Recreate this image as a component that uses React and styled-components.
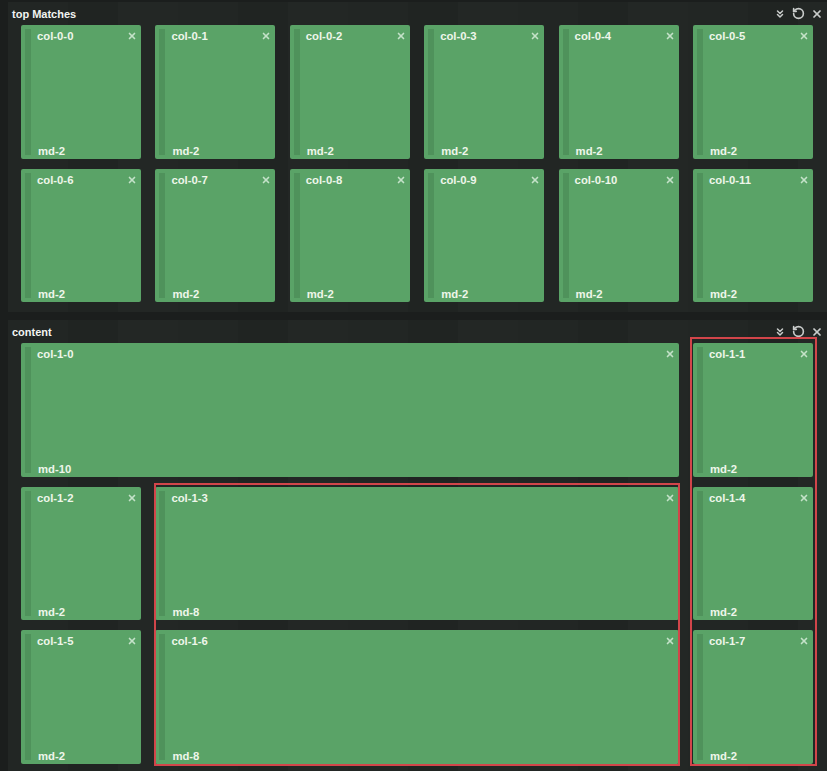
import React from "react";
import styled, { createGlobalStyle } from "styled-components";
import { ChevronsDown, RotateCcw, X } from "lucide-react";

const Global = createGlobalStyle`
  html, body { margin: 0; padding: 0; background: #1b1e1d; }
  body { font-family: "Liberation Sans", Arial, sans-serif; }
  * { box-sizing: border-box; }
`;

const Page = styled.div`
  width: 827px;
  min-height: 771px;
  padding: 2px 0 0 8px;
  display: flex;
  flex-direction: column;
  gap: 8px;
  background: #1b1e1d;
`;

const Panel = styled.section`
  background: repeating-linear-gradient(90deg, #222624 0 60px, #202422 60px 110px, #232725 110px 170px);
  display: flex;
  flex-direction: column;
  padding-bottom: ${(p) => p.$pb}px;
`;

const Header = styled.div`
  height: 23px;
  display: flex;
  align-items: center;
  padding: 0 4px 0 4px;
  color: #f2f4f1;
  font-weight: bold;
  font-size: 11px;
`;

const Title = styled.span`
  flex: 1;
`;

const Tools = styled.div`
  display: flex;
  align-items: center;
  gap: 6px;
  color: #c9cccb;
`;

const Grid = styled.div`
  display: grid;
  grid-template-columns: repeat(6, 1fr);
  grid-auto-rows: 133.5px;
  column-gap: 14.4px;
  row-gap: 10px;
  padding: 0 14px 0 13px;
`;

const Tile = styled.div`
  grid-column: ${(p) => p.$col} / span ${(p) => p.$span};
  grid-row: ${(p) => p.$row};
  background: #5aa367;
  border-radius: 2px;
  display: flex;
  padding: 4px;
  color: #eef6ea;
  font-weight: bold;
  font-size: 11.3px;
`;

const Stripe = styled.div`
  width: 6px;
  background: #4f925b;
  flex: none;
`;

const TileBody = styled.div`
  flex: 1;
  display: flex;
  flex-direction: column;
  justify-content: space-between;
  padding: 1px 0 0 6px;
`;

const TileTop = styled.div`
  display: flex;
  justify-content: space-between;
  align-items: center;
`;

const TileBottom = styled.div`
  padding-left: 1px;
  line-height: 13px;
  margin-bottom: -3px;
`;

const Close = styled.span`
  color: #c4e2c8;
  display: flex;
`;

const Highlight = styled.div`
  grid-column: ${(p) => p.$col} / span ${(p) => p.$span};
  grid-row: ${(p) => p.$row} / span ${(p) => p.$rows};
  margin: ${(p) => p.$m};
  border: 2px solid #d2454a;
  pointer-events: none;
  z-index: 2;
`;

const top = Array.from({ length: 12 }, (_, i) => ({
  id: `col-0-${i}`,
  col: (i % 6) + 1,
  span: 1,
  row: Math.floor(i / 6) + 1,
  md: "md-2",
}));

const content = [
  { id: "col-1-0", col: 1, span: 5, row: 1, md: "md-10" },
  { id: "col-1-1", col: 6, span: 1, row: 1, md: "md-2" },
  { id: "col-1-2", col: 1, span: 1, row: 2, md: "md-2" },
  { id: "col-1-3", col: 2, span: 4, row: 2, md: "md-8" },
  { id: "col-1-4", col: 6, span: 1, row: 2, md: "md-2" },
  { id: "col-1-5", col: 1, span: 1, row: 3, md: "md-2" },
  { id: "col-1-6", col: 2, span: 4, row: 3, md: "md-8" },
  { id: "col-1-7", col: 6, span: 1, row: 3, md: "md-2" },
];

function Cell({ t }) {
  return (
    <Tile $col={t.col} $span={t.span} $row={t.row}>
      <Stripe />
      <TileBody>
        <TileTop>
          <span>{t.id}</span>
          <Close>
            <X size={10} strokeWidth={4} />
          </Close>
        </TileTop>
        <TileBottom>{t.md}</TileBottom>
      </TileBody>
    </Tile>
  );
}

function PanelHeader({ title }) {
  return (
    <Header>
      <Title>{title}</Title>
      <Tools>
        <ChevronsDown size={12} strokeWidth={3} />
        <RotateCcw size={13} strokeWidth={3} />
        <X size={12} strokeWidth={3.5} />
      </Tools>
    </Header>
  );
}

export default function App() {
  return (
    <>
      <Global />
      <Page>
        <Panel $pb={10}>
          <PanelHeader title="top Matches" />
          <Grid>
            {top.map((t) => (
              <Cell key={t.id} t={t} />
            ))}
          </Grid>
        </Panel>
        <Panel $pb={8}>
          <PanelHeader title="content" />
          <Grid>
            {content.map((t) => (
              <Cell key={t.id} t={t} />
            ))}
            <Highlight $col={6} $span={1} $row={1} $rows={3} $m="-6px -4px -2px -3px" />
            <Highlight $col={2} $span={4} $row={2} $rows={2} $m="-4px -1px -2px -1px" />
          </Grid>
        </Panel>
      </Page>
    </>
  );
}
